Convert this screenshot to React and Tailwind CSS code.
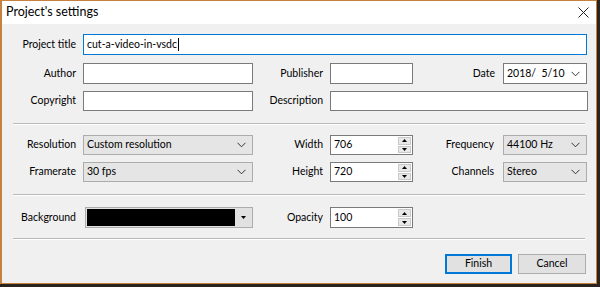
import React from "react";

const Chevron = () => (
  <svg width="9" height="6" viewBox="0 0 9 6" className="shrink-0">
    <path d="M0.5 0.8 L4.5 4.8 L8.5 0.8" fill="none" stroke="#333" strokeWidth="1" />
  </svg>
);

const TextBox = ({ w, value, focused }) => (
  <div
    className={`h-full ${w} bg-white border ${
      focused ? "border-[#0078d7]" : "border-[#7a7a7a]"
    } flex items-center pl-[3px]`}
  >
    {value}
    {focused && <span className="w-px h-[13px] bg-black ml-px" />}
  </div>
);

const Combo = ({ w, value, white }) => (
  <div
    className={`h-full ${w} border ${
      white ? "bg-white border-[#7a7a7a]" : "bg-[#e5e5e5] border-[#acacac]"
    } flex items-center justify-between pl-[3px] pr-[6px]`}
  >
    <span className="whitespace-pre">{value}</span>
    <Chevron />
  </div>
);

const Spin = ({ value }) => (
  <div className="h-full w-[83px] bg-white border border-[#7a7a7a] flex items-stretch">
    <div className="flex-1 flex items-center pl-[3px]">{value}</div>
    <div className="w-[15px] flex flex-col gap-px p-px">
      <div className="flex-1 bg-[#e8e8e8] border border-[#c9c9c9] flex items-center justify-center">
        <svg width="5" height="3" viewBox="0 0 5 3">
          <path d="M0 3 L2.5 0 L5 3 Z" fill="#000" />
        </svg>
      </div>
      <div className="flex-1 bg-[#e8e8e8] border border-[#c9c9c9] flex items-center justify-center">
        <svg width="5" height="3" viewBox="0 0 5 3">
          <path d="M0 0 L2.5 3 L5 0 Z" fill="#000" />
        </svg>
      </div>
    </div>
  </div>
);

const Label = ({ w, children, mr }) => (
  <div className={`${w} ${mr} shrink-0 text-right`}>{children}</div>
);

const Separator = ({ mt }) => (
  <div className={`${mt} w-[572px] border-t border-[#b9b9b9] border-b border-b-white`} />
);

const Button = ({ children, primary }) => (
  <div
    className={`h-[20px] flex items-center justify-center bg-[#e1e1e1] ${
      primary
        ? "w-[67px] border-2 border-[#0078d7]"
        : "w-[68px] border border-[#adadad]"
    }`}
  >
    {children}
  </div>
);

export default function App() {
  return (
    <div
      className="w-[600px] h-[287px] bg-[#2a2421] overflow-hidden text-[10.5px] text-black"
      style={{ fontFamily: "Lato, 'Noto Sans', sans-serif" }}
    >
      <div className="w-[597px] h-[284px] border border-[#c6813f] border-l-2 bg-[#f0f0f0] flex flex-col">
        {/* Title bar */}
        <div className="h-[23px] bg-white flex items-center justify-between pl-[4px] pr-[7px] shrink-0">
          <span className="text-[12.5px]">Project's settings</span>
          <svg width="11" height="11" viewBox="0 0 11 11">
            <path d="M0.5 0.5 L10.5 10.5 M10.5 0.5 L0.5 10.5" stroke="#222" strokeWidth="1" />
          </svg>
        </div>

        {/* Body */}
        <div className="pl-[11px] flex flex-col">
          <div className="mt-[10px] h-[21px] flex items-center">
            <Label w="w-[63px]" mr="mr-[7px]">Project title</Label>
            <TextBox w="w-[504px]" value="cut-a-video-in-vsdc" focused />
          </div>

          <div className="mt-[8px] h-[21px] flex items-center">
            <Label w="w-[63px]" mr="mr-[7px]">Author</Label>
            <TextBox w="w-[170px]" />
            <Label w="w-[70px]" mr="mr-[7px]">Publisher</Label>
            <TextBox w="w-[83px]" />
            <Label w="w-[82px]" mr="mr-[8px]">Date</Label>
            <Combo w="w-[84px]" value="2018/  5/10" white />
          </div>

          <div className="mt-[7px] h-[20px] flex items-center">
            <Label w="w-[63px]" mr="mr-[7px]">Copyright</Label>
            <TextBox w="w-[170px]" />
            <Label w="w-[70px]" mr="mr-[7px]">Description</Label>
            <TextBox w="w-[258px]" />
          </div>

          <Separator mt="mt-[12px]" />

          <div className="mt-[10px] h-[20px] flex items-center">
            <Label w="w-[63px]" mr="mr-[7px]">Resolution</Label>
            <Combo w="w-[170px]" value="Custom resolution" />
            <Label w="w-[70px]" mr="mr-[7px]">Width</Label>
            <Spin value="706" />
            <Label w="w-[81px]" mr="mr-[9px]">Frequency</Label>
            <Combo w="w-[84px]" value="44100 Hz" />
          </div>

          <div className="mt-[7px] h-[20px] flex items-center">
            <Label w="w-[63px]" mr="mr-[7px]">Framerate</Label>
            <Combo w="w-[170px]" value="30 fps" />
            <Label w="w-[70px]" mr="mr-[7px]">Height</Label>
            <Spin value="720" />
            <Label w="w-[81px]" mr="mr-[9px]">Channels</Label>
            <Combo w="w-[84px]" value="Stereo" />
          </div>

          <Separator mt="mt-[12px]" />

          <div className="mt-[11px] h-[21px] flex items-center">
            <Label w="w-[63px]" mr="mr-[9px]">Background</Label>
            <div className="h-full w-[168px] bg-[#e1e1e1] border border-[#adadad] flex items-stretch p-px">
              <div className="flex-1 bg-black" />
              <div className="w-[16px] flex items-center justify-center">
                <svg width="5" height="3" viewBox="0 0 5 3">
                  <path d="M0 0 L2.5 3 L5 0 Z" fill="#000" />
                </svg>
              </div>
            </div>
            <Label w="w-[70px]" mr="mr-[7px]">Opacity</Label>
            <Spin value="100" />
          </div>

          <Separator mt="mt-[10px]" />

          <div className="mt-[14px] flex items-center gap-[6px] ml-[432px]">
            <Button primary>Finish</Button>
            <Button>Cancel</Button>
          </div>
        </div>
      </div>
    </div>
  );
}
